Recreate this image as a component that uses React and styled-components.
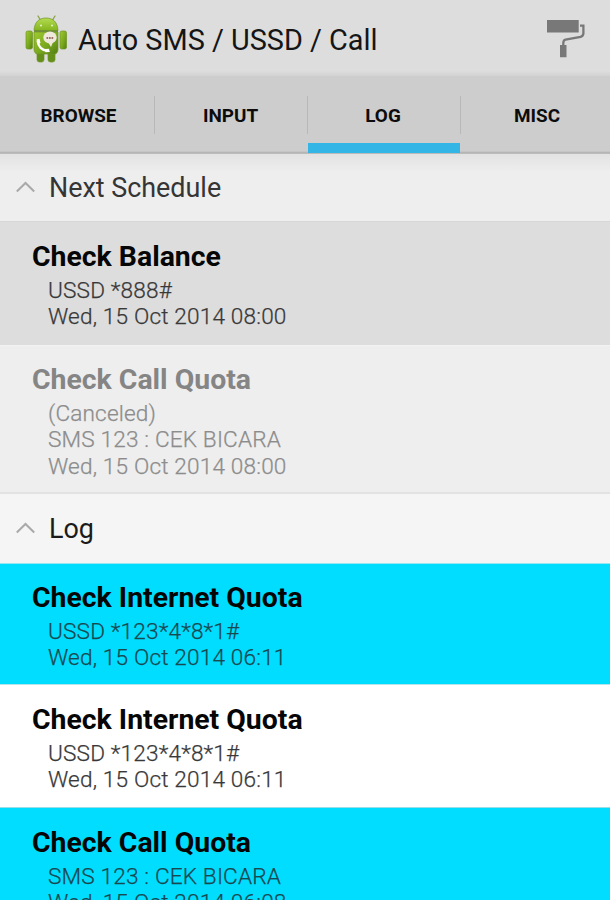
import React from "react";
import styled, { createGlobalStyle } from "styled-components";

const GlobalStyle = createGlobalStyle`
  * { box-sizing: border-box; }
  body { margin: 0; background: #fff; font-family: Roboto, "Liberation Sans", sans-serif; }
`;

const Screen = styled.div`
  display: flex;
  flex-direction: column;
  width: 610px;
  height: 900px;
  overflow: hidden;
  background: #eee;
`;

const ActionBar = styled.header`
  display: flex;
  align-items: center;
  flex: none;
  height: 76px;
  padding: 0 24px;
  background: linear-gradient(#dddddd 0, #dddddd 71px, #d2d2d2 76px);
`;

const AppIcon = styled.svg`
  flex: none;
  width: 44px;
  height: 50px;
`;

const Title = styled.h1`
  flex: 1;
  margin: 3px 0 0 10px;
  font-size: 28.85px;
  line-height: 34px;
  font-weight: 400;
  white-space: nowrap;
  color: #151515;
`;

const RollerIcon = styled.svg`
  flex: none;
  width: 40px;
  height: 40px;
`;

const TabBar = styled.nav`
  display: grid;
  grid-template-columns: 155px 153px 152px 150px;
  flex: none;
  height: 78px;
  background: linear-gradient(#cdcdcd 0, #cdcdcd 75px, #adadad 77px, #c9c9c9 78px);
`;

const Tab = styled.div`
  display: flex;
  align-items: center;
  justify-content: center;
  height: 77px;
  padding: ${(p) => (p.$active ? 11.5 : 2)}px ${(p) => p.$right || 0}px 0 ${(p) => p.$left || 0}px;
  border-bottom: ${(p) => (p.$active ? "10px solid #33b5e5" : "0")};
  font-size: 18.9px;
  font-weight: 700;
  color: #0c0c0c;
  background-image: linear-gradient(#b8b8b8, #b8b8b8);
  background-repeat: no-repeat;
  background-position: ${(p) => (p.$leading ? "left" : "right")} 20px;
  background-size: ${(p) => (p.$divider ? "1px 38px" : "0 0")};
`;

const SectionHeader = styled.div`
  display: flex;
  align-items: center;
  flex: none;
  height: ${(p) => p.$height}px;
  padding: ${(p) => p.$shift}px 0 0 16px;
  font-size: 26.9px;
  color: ${(p) => p.$color};
  background: ${(p) => p.$background};
`;

const Chevron = styled.svg`
  flex: none;
  width: 19px;
  height: 12px;
  margin: -3px 14px 0 0;
`;

const Entry = styled.article`
  flex: none;
  height: ${(p) => p.$height}px;
  padding: ${(p) => p.$top}px 0 0 32px;
  background: ${(p) => p.$background};
  border-top: 1px solid ${(p) => p.$line};
`;

const EntryName = styled.h2`
  margin: 0 0 4px;
  font-size: 28.4px;
  line-height: 34px;
  font-weight: 700;
  white-space: nowrap;
  color: ${(p) => (p.$muted ? "#858585" : "#060606")};
`;

const EntryLine = styled.p`
  margin: 0 0 0 16px;
  font-size: 22.6px;
  line-height: 26.3px;
  font-weight: 300;
  letter-spacing: 0.17px;
  -webkit-text-stroke: 0.25px currentColor;
  white-space: nowrap;
  color: ${(p) => p.$color};
`;

const tabs = [
  { label: "BROWSE", divider: true, left: 2 },
  { label: "INPUT", divider: true, right: 2 },
  { label: "LOG", active: true, right: 2 },
  { label: "MISC", divider: true, leading: true, left: 4 },
];

const scheduled = [
  { name: "Check Balance", lines: ["USSD *888#", "Wed, 15 Oct 2014 08:00"], background: "#dddddd", line: "#d7d7d7", color: "#383838", height: 124, top: 18 },
  { name: "Check Call Quota", lines: ["(Canceled)", "SMS 123 : CEK BICARA", "Wed, 15 Oct 2014 08:00"], background: "#eeeeee", line: "#f2f2f2", color: "#8c8c8c", height: 147, top: 17, muted: true },
];

const logged = [
  { name: "Check Internet Quota", lines: ["USSD *123*4*8*1#", "Wed, 15 Oct 2014 06:11"], background: "#00ddff", line: "#9be6f1", color: "#19484f", height: 121, top: 17 },
  { name: "Check Internet Quota", lines: ["USSD *123*4*8*1#", "Wed, 15 Oct 2014 06:11"], background: "#ffffff", line: "#b5e6ee", color: "#383838", height: 123, top: 18 },
  { name: "Check Call Quota", lines: ["SMS 123 : CEK BICARA", "Wed, 15 Oct 2014 06:08"], background: "#00ddff", line: "#9bdde7", color: "#19484f", height: 123, top: 18 },
];

function RobotLogo() {
  return (
    <AppIcon viewBox="0 0 44 50">
      <defs>
        <linearGradient id="body" x1="0" y1="0" x2="1" y2="1">
          <stop offset="0" stopColor="#a0ca32" />
          <stop offset="0.55" stopColor="#7aa91f" />
          <stop offset="1" stopColor="#527d10" />
        </linearGradient>
        <linearGradient id="head" x1="0" y1="0" x2="0" y2="1">
          <stop offset="0" stopColor="#b4dc50" />
          <stop offset="1" stopColor="#83b51d" />
        </linearGradient>
      </defs>
      <g stroke="#6d9422" strokeWidth="0.7">
        <path d="M14 3l3 5M31 3l-3 5" stroke="#8ba549" strokeWidth="1.4" strokeLinecap="round" />
        <rect x="2" y="18" width="6.5" height="18" rx="1.8" fill="url(#body)" />
        <rect x="36" y="18" width="6.5" height="18" rx="1.8" fill="url(#body)" />
        <rect x="13" y="38" width="7" height="11" rx="2.4" fill="#64901a" />
        <rect x="24" y="38" width="7" height="11" rx="2.4" fill="#64901a" />
        <path d="M10 19h24v17q0 5-4 5H14q-4 0-4-5z" fill="url(#body)" />
        <path d="M10 17.5C10.5 9 15 5 22 5s11.5 4 12 12.5z" fill="url(#head)" />
      </g>
      <path d="M10 18.2h24" stroke="#527713" strokeWidth="1" />
      <circle cx="17" cy="12.5" r="1" fill="#e6efcf" />
      <circle cx="28" cy="12.5" r="1" fill="#e6efcf" />
      <ellipse cx="26" cy="24.5" rx="6.7" ry="5.9" fill="#eee9dc" />
      <path d="M24 29l3 5 2-5z" fill="#eee9dc" />
      <path d="M22.5 25h1.7M25 25h1.7M27.5 25h1.7" stroke="#9c7066" strokeWidth="2.2" />
      <path d="M13.8 28c.5 5.5 4.2 9.3 9.700 9.800" fill="none" stroke="#fff" strokeWidth="2.6" />
      <path d="M12.5 26.5l3-.7 1 4.200-3 .8zM20.5 36l4.500-.3.800 3.300-4.300.2z" fill="#fff" />
    </AppIcon>
  );
}

function PaintRoller() {
  return (
    <RollerIcon viewBox="0 0 40 40">
      <path d="M1 2h31.7v12.5H1zM14 27h6.5v12.3H14z" fill="#787878" />
      <path d="M34 7.7h3.4v7.5q0 2.6-2.8 3.6L19.5 21.600q-2.200.5-2.200 3.600v2" fill="none" stroke="#787878" strokeWidth="2.3" />
    </RollerIcon>
  );
}

function Section({ title, ...look }) {
  return (
    <SectionHeader {...look}>
      <Chevron viewBox="0 0 19 12">
        <path d="M.8 10.5L9.500 2l8.700 8.500" fill="none" stroke="#a9a9a9" strokeWidth="2" />
      </Chevron>
      {title}
    </SectionHeader>
  );
}

function ScheduleEntry({ item }) {
  return (
    <Entry $height={item.height} $top={item.top} $background={item.background} $line={item.line}>
      <EntryName $muted={item.muted}>{item.name}</EntryName>
      {item.lines.map((text) => (
        <EntryLine key={text} $color={item.color}>{text}</EntryLine>
      ))}
    </Entry>
  );
}

export default function App() {
  return (
    <Screen>
      <GlobalStyle />
      <ActionBar>
        <RobotLogo />
        <Title>Auto SMS / USSD / Call</Title>
        <PaintRoller />
      </ActionBar>
      <TabBar>
        {tabs.map((t) => (
          <Tab key={t.label} $active={t.active} $divider={t.divider} $leading={t.leading} $left={t.left} $right={t.right}>{t.label}</Tab>
        ))}
      </TabBar>
      <Section title="Next Schedule" $height={67} $shift={1} $color="#353535" $background="linear-gradient(#e2e2e2, #eeeeee 18px)" />
      {scheduled.map((item) => <ScheduleEntry key={item.name} item={item} />)}
      <Section title="Log" $height={71} $shift={3} $color="#1b1b1b" $background="linear-gradient(#e2e2e2 2px, #f5f5f5 2px)" />
      {logged.map((item, i) => <ScheduleEntry key={i} item={item} />)}
    </Screen>
  );
}
